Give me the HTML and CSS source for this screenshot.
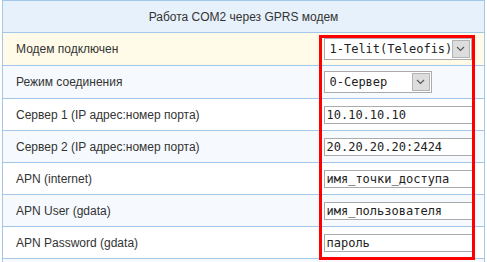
FILE: index.html
```html
<!DOCTYPE html>
<html lang="ru">
<head>
<meta charset="utf-8">
<title>Работа COM2 через GPRS модем</title>
<link rel="stylesheet" href="styles.css">
</head>
<body>
<div class="page">
  <table class="cfg">
    <colgroup><col class="c-lbl"><col class="c-val"></colgroup>
    <tr class="head"><th colspan="2">Работа COM2 через GPRS модем</th></tr>
    <tr class="hl r-sel">
      <td class="lbl">Модем подключен</td>
      <td class="val"><span class="sel sel-long"><select><option>1-Telit(Teleofis)</option></select><span class="arr"><svg width="9" height="6" viewBox="0 0 9 6"><path d="M1 1 L4.5 4.5 L8 1" fill="none" stroke="#555" stroke-width="1.1"/></svg></span></span></td>
    </tr>
    <tr class="alt r-sel">
      <td class="lbl">Режим соединения</td>
      <td class="val"><span class="sel sel-short"><select><option>0-Сервер</option></select><span class="arr"><svg width="9" height="6" viewBox="0 0 9 6"><path d="M1 1 L4.5 4.5 L8 1" fill="none" stroke="#555" stroke-width="1.1"/></svg></span></span></td>
    </tr>
    <tr>
      <td class="lbl">Сервер 1 (IP адрес:номер порта)</td>
      <td class="val"><input class="txt" type="text" value="10.10.10.10"></td>
    </tr>
    <tr class="alt">
      <td class="lbl">Сервер 2 (IP адрес:номер порта)</td>
      <td class="val"><input class="txt" type="text" value="20.20.20.20:2424"></td>
    </tr>
    <tr>
      <td class="lbl">APN (internet)</td>
      <td class="val"><input class="txt" type="text" value="имя_точки_доступа"></td>
    </tr>
    <tr class="alt">
      <td class="lbl">APN User (gdata)</td>
      <td class="val"><input class="txt" type="text" value="имя_пользователя"></td>
    </tr>
    <tr>
      <td class="lbl">APN Password (gdata)</td>
      <td class="val"><input class="txt" type="text" value="пароль"></td>
    </tr>
    <tr class="alt">
      <td class="lbl">&nbsp;</td>
      <td class="val"></td>
    </tr>
  </table>
  <div class="mark"></div>
</div>
</body>
</html>
```

FILE: styles.css
```css
html, body {
  margin: 0;
  padding: 0;
  background: #ffffff;
}
.page {
  position: relative;
  padding: 0 0 0 2px;
  font-family: "Liberation Sans", Arial, sans-serif;
  font-size: 12px;
  color: #333333;
}
.cfg {
  width: 483px;
  border-collapse: collapse;
  table-layout: fixed;
  border: 1px solid #a2c7e8;
}
.c-lbl { width: 320px; }
.cfg th {
  height: 31px;
  padding: 0;
  background: #e7f1fb;
  font-weight: normal;
  text-align: center;
  color: #333333;
  border-bottom: 1px solid #a2c7e8;
}
.cfg td {
  height: 31px;
  padding: 0;
  border-bottom: 1px solid #a2c7e8;
  vertical-align: middle;
}
.cfg tr.r-sel td { height: 32px; }
.cfg tr.hl td { background: #fffbe8; }
.cfg tr.alt td { background: #f6fafe; }
.lbl {
  padding-left: 13px !important;
}
.val {
  padding-left: 1px !important;
}
.txt {
  box-sizing: border-box;
  width: 149px;
  height: 18px;
  margin: 0;
  padding: 0 2px;
  border: 1px solid #ababab;
  background: #ffffff;
  font-family: "DejaVu Sans Mono", monospace;
  font-size: 12px;
  color: #222222;
  display: block;
  outline: none;
}
.sel {
  box-sizing: border-box;
  display: flex;
  align-items: center;
  height: 22px;
  border: 1px solid #ababab;
  background: #ffffff;
}
.sel-long { width: 148px; }
.sel-short { width: 108px; }
.sel select {
  appearance: none;
  -webkit-appearance: none;
  flex: 1;
  min-width: 0;
  height: 20px;
  margin: 0;
  padding: 0 0 0 5px;
  border: 0;
  background: transparent;
  font-family: "DejaVu Sans Mono", monospace;
  font-size: 12px;
  color: #222222;
  outline: none;
}
.arr {
  box-sizing: border-box;
  width: 18px;
  height: 18px;
  margin-right: 1px;
  display: flex;
  align-items: center;
  justify-content: center;
  background: #dddddd;
  border: 1px solid #b3b3b3;
}
.mark {
  position: absolute;
  left: 319px;
  top: 35px;
  width: 156px;
  height: 225px;
  box-sizing: border-box;
  border: 3px solid #ff0000;
  pointer-events: none;
}
```
